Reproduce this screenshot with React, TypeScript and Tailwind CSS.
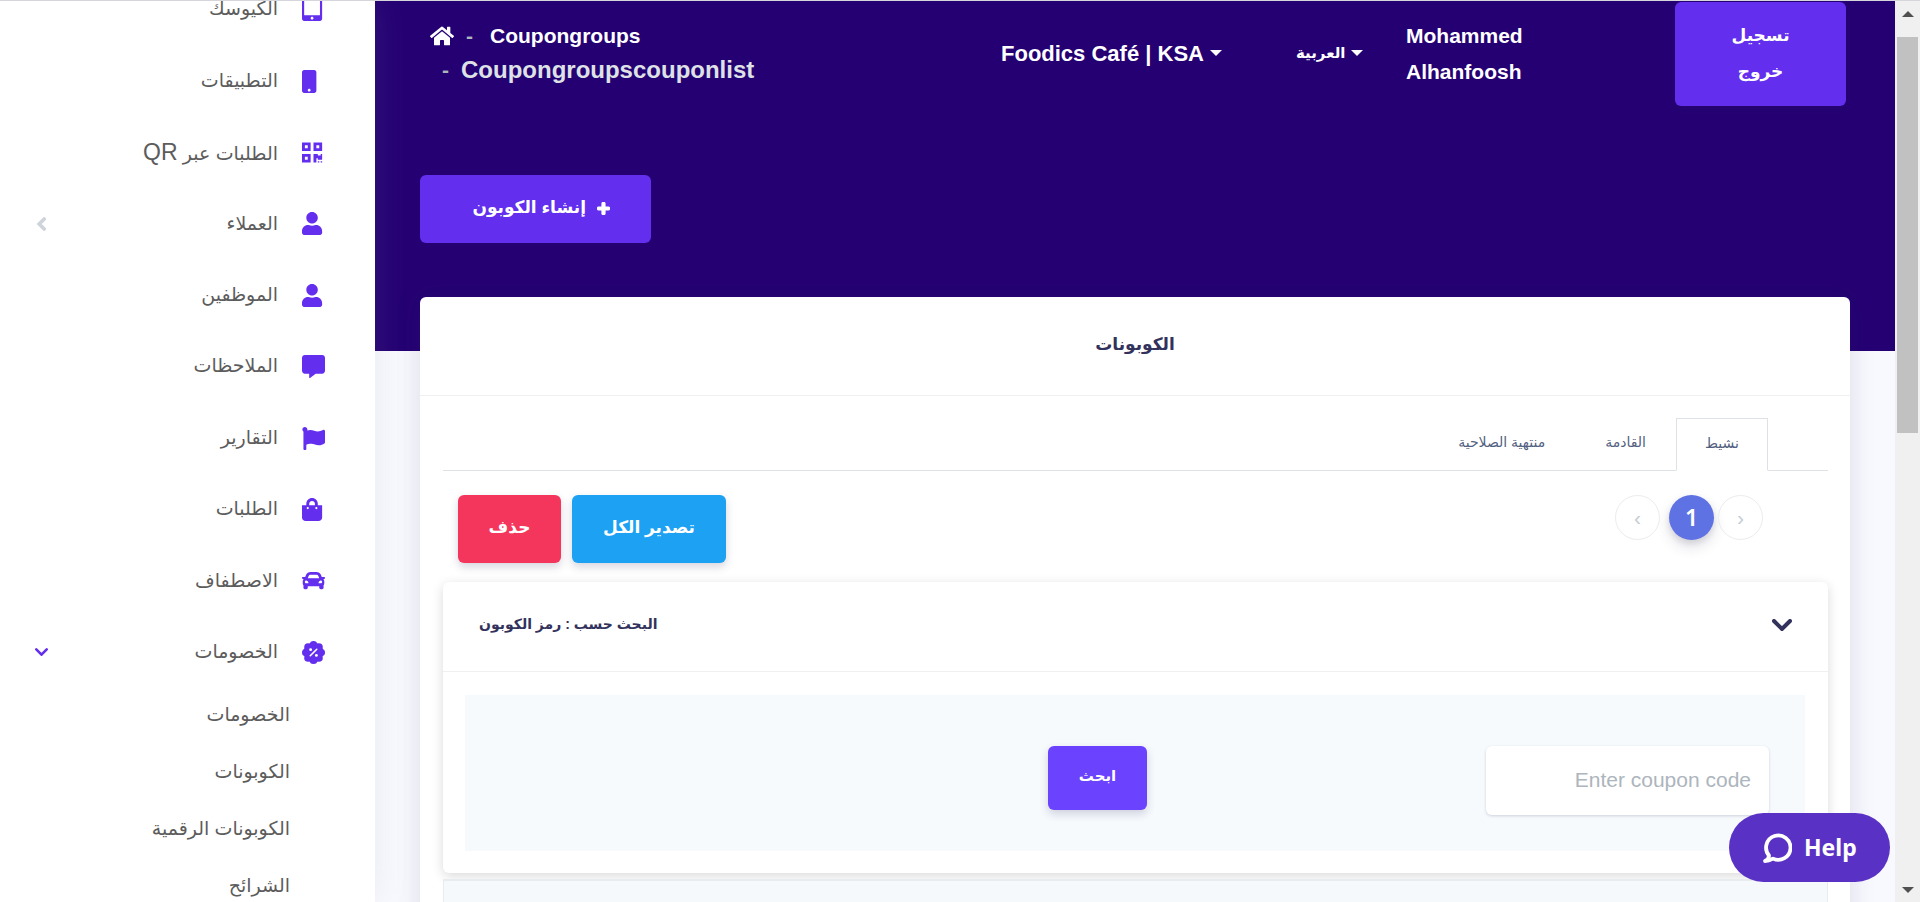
import type { ComponentType } from "react";
import {
  FaCar,
  FaCommentAlt,
  FaFlag,
  FaHome,
  FaMobile,
  FaPlus,
  FaQrcode,
  FaShoppingBag,
  FaTabletAlt,
  FaUser,
} from "react-icons/fa";

interface IconProps {
  className?: string;
  preserveAspectRatio?: string;
}

interface NavItem {
  label: string;
  latin?: string;
  icon: ComponentType<IconProps>;
  state?: "closed" | "open";
}

// Scalloped badge with a percent sign
function BadgePercent({ className }: IconProps) {
  return (
    <svg viewBox="0 0 24 24" className={className} fill="currentColor" aria-hidden="true">
      <circle cx="12" cy="12" r="10.2" />
      <circle cx="12" cy="4" r="4" />
      <circle cx="17.7" cy="6.3" r="4" />
      <circle cx="20" cy="12" r="4" />
      <circle cx="17.7" cy="17.7" r="4" />
      <circle cx="12" cy="20" r="4" />
      <circle cx="6.3" cy="17.7" r="4" />
      <circle cx="4" cy="12" r="4" />
      <circle cx="6.3" cy="6.3" r="4" />
      <path d="M8.6 15.4l6.8-6.8" stroke="#fff" strokeWidth="1.6" strokeLinecap="round" />
      <circle cx="9" cy="9" r="1.5" fill="#fff" />
      <circle cx="15" cy="15" r="1.5" fill="#fff" />
    </svg>
  );
}

function ChevronDown({ className }: IconProps) {
  return (
    <svg viewBox="0 0 20 12" className={className} fill="none" stroke="currentColor" strokeWidth="4" strokeLinecap="round" aria-hidden="true">
      <path d="M2 2l8 8 8-8" />
    </svg>
  );
}

function ChevronLeft({ className }: IconProps) {
  return (
    <svg viewBox="0 0 9 14" className={className} fill="none" stroke="currentColor" strokeWidth="3.6" strokeLinecap="round" aria-hidden="true">
      <path d="M7.2 2L2.200 7l5 5" />
    </svg>
  );
}

const navItems: NavItem[] = [
  { label: "الكيوسك", icon: FaTabletAlt },
  { label: "التطبيقات", icon: FaMobile },
  { label: "الطلبات عبر", latin: "QR", icon: FaQrcode },
  { label: "العملاء", icon: FaUser, state: "closed" },
  { label: "الموظفين", icon: FaUser },
  { label: "الملاحظات", icon: FaCommentAlt },
  { label: "التقارير", icon: FaFlag },
  { label: "الطلبات", icon: FaShoppingBag },
  { label: "الاصطفاف", icon: FaCar },
  { label: "الخصومات", icon: BadgePercent, state: "open" },
];

const subItems = ["الخصومات", "الكوبونات", "الكوبونات الرقمية", "الشرائح"];

function Sidebar() {
  return (
    <aside className="relative z-10 w-[375px] shrink-0 overflow-hidden bg-white text-[#5c5c5c] shadow-[0_0_32px_rgba(136,152,170,0.15)]">
      <nav className="-mt-[27px]">
        <ul className="grid h-[714px] auto-rows-fr">
          {navItems.map(({ label, latin, icon: Icon, state }) => (
            <li key={label}>
              <a href="#" dir="rtl" className="flex h-full items-center pr-[50px] pl-[35px]">
                <Icon className="h-[23px] w-[23px] text-[#632eee]" preserveAspectRatio="xMinYMid meet" />
                <span className="mr-[24px] grow text-[19px]">
                  {label} {latin && <span className="text-[23px]">{latin}</span>}
                </span>
                {state === "closed" && <ChevronLeft className="h-[14px] w-[13px] text-[#ced4da]" />}
                {state === "open" && <ChevronDown className="h-[8px] w-[13px] text-[#632eee]" />}
              </a>
            </li>
          ))}
        </ul>
        <ul>
          {subItems.map((label) => (
            <li key={label}>
              <a href="#" dir="rtl" className="flex h-[57px] items-center pr-[85px] pb-[2px] text-[19px]">
                {label}
              </a>
            </li>
          ))}
        </ul>
      </nav>
    </aside>
  );
}

function Caret() {
  return <span className="border-x-[6px] border-t-[6px] border-x-transparent border-t-white" />;
}

function TopBar() {
  return (
    <header className="flex h-[106px] items-start pt-px pr-[49px] pl-[55px] font-bold text-white">
      <nav className="w-[571px] pt-[20px]" aria-label="breadcrumb">
        <ol>
          <li className="flex h-[28px] items-center text-[21px]">
            <a href="#" aria-label="Home">
              <FaHome className="h-[24px] w-[24px]" />
            </a>
            <span className="mx-[12px] text-[#adb5bd]">-</span>
            <a href="#" className="ml-[5px]">Coupongroups</a>
          </li>
          <li className="flex h-[40px] items-center pl-[12px] text-[24px] text-[#dee2e6]">
            <span className="mr-[12px] text-[21px] text-[#adb5bd]">-</span>
            Coupongroupscouponlist
          </li>
        </ol>
      </nav>
      <button className="mt-[33px] flex h-[36px] w-[295px] items-center gap-[6px] text-[22px]">
        Foodics Café | KSA <Caret />
      </button>
      <button className="mt-[33px] flex h-[36px] w-[110px] items-center gap-[6px] text-[15px]">
        <span dir="rtl">العربية</span> <Caret />
      </button>
      <a href="#" className="mt-[16px] w-[140px] text-[21px] leading-[36px]">
        Mohammed Alhanfoosh
      </a>
      <button
        dir="rtl"
        className="ml-auto h-[104px] w-[171px] rounded-md bg-[#632eee] px-[50px] text-[17px] leading-[36px] shadow-[0_4px_6px_rgba(50,50,93,0.11)]"
      >
        تسجيل خروج
      </button>
    </header>
  );
}

const tabs = [
  { label: "نشيط", active: true },
  { label: "القادمة", active: false },
  { label: "منتهية الصلاحية", active: false },
];

function Tabs() {
  return (
    <div dir="rtl" role="tablist" className="flex border-b border-[#dee2e6] pr-[60px] text-[#525f7f]">
      {tabs.map(({ label, active }) => (
        <button
          key={label}
          role="tab"
          aria-selected={active}
          className={
            active
              ? "-mb-px h-[53px] w-[92px] border border-b-white border-[#dee2e6] bg-white pb-[3px] text-[14px]"
              : "h-[52px] px-[30px] pb-[3px] text-[14px]"
          }
        >
          {label}
        </button>
      ))}
    </div>
  );
}

function Toolbar() {
  return (
    <div className="flex h-[68px] items-start justify-between pr-[65px] pl-[15px]">
      <div className="flex gap-[11px] text-[17px] font-bold text-white">
        <button className="h-[68px] w-[103px] rounded-md bg-[#f5365c] pb-[3px] shadow-[0_4px_8px_rgba(50,50,93,0.2)]">
          حذف
        </button>
        <button className="h-[68px] w-[154px] rounded-md bg-[#1da1f2] pb-[3px] shadow-[0_4px_8px_rgba(50,50,93,0.2)]">
          تصدير الكل
        </button>
      </div>
      <nav className="flex text-[21px] text-[#c3ccd5]" aria-label="pagination">
        <button className="h-[45px] w-[45px] rounded-full border border-[#ececee]">‹</button>
        <button className="mr-[4px] ml-[9px] h-[45px] w-[45px] rounded-full bg-[#5e72e4] font-['Noto_Sans','Open_Sans',sans-serif] text-[23px] font-semibold text-white shadow-[0_7px_14px_rgba(50,50,93,0.15),0_3px_6px_rgba(0,0,0,0.1)]">
          1
        </button>
        <button className="h-[45px] w-[45px] rounded-full border border-[#ececee]">›</button>
      </nav>
    </div>
  );
}

function SearchCard() {
  return (
    <section className="mt-[19px] rounded-md bg-white shadow-[0_3px_12px_rgba(0,0,0,0.15)]">
      <div className="flex h-[90px] items-center justify-between border-b border-[#f0f0f2] px-[36px] pb-[4px] text-[#32325d]">
        <h3 dir="rtl" className="text-[14px] font-bold">
          البحث حسب : رمز الكوبون
        </h3>
        <button aria-label="Toggle">
          <ChevronDown className="h-[12px] w-[20px]" />
        </button>
      </div>
      <div className="pt-[23px] pr-[23px] pb-[22px] pl-[22px]">
        <form className="flex h-[156px] items-start justify-end bg-[#f6fafd] pt-[51px] pr-[36px]">
          <button
            type="button"
            className="mr-[339px] h-[64px] w-[99px] rounded-md bg-[#6b42fe] pb-[3px] text-[15px] font-bold text-white shadow-[0_4px_8px_rgba(50,50,93,0.2)]"
          >
            ابحث
          </button>
          <input
            type="text"
            aria-label="Coupon code"
            placeholder="Enter coupon code"
            className="h-[69px] w-[283px] rounded-md bg-white px-[18px] pb-[2px] text-right text-[21px] shadow-[0_1px_3px_rgba(50,50,93,0.2)] outline-none placeholder:text-[#adb5bd]"
          />
        </form>
      </div>
    </section>
  );
}

function Content() {
  return (
    <main className="min-w-0 grow overflow-hidden bg-[#f8f9fe]">
      <div className="h-[350px] bg-[#250073]">
        <TopBar />
        <div className="px-[45px] pt-[68px]">
          <button
            dir="rtl"
            className="flex h-[68px] w-[231px] items-center gap-[11px] rounded-md bg-[#632eee] pr-[41px] pb-[2px] text-[17px] font-bold text-white"
          >
            <FaPlus className="h-[13px] w-[13px] stroke-white stroke-[70px]" />
            إنشاء الكوبون
          </button>
        </div>
      </div>
      <section className="relative mr-[45px] ml-[45px] -mt-[54px] rounded-md bg-white shadow-[0_0_24px_rgba(50,50,93,0.15)]">
        <h2 className="flex h-[99px] items-center justify-center border-b border-[#f0f0f2] pb-[3px] text-[17px] font-bold text-[#32325d]">
          الكوبونات
        </h2>
        <div className="pt-[22px] pr-[22px] pl-[23px]">
          <Tabs />
          <div className="pt-[24px]">
            <Toolbar />
          </div>
          <SearchCard />
          <table className="mt-[6px] w-full">
            <thead>
              <tr>
                <th className="h-[80px] border border-t-2 border-[#e9ecef] bg-[#f6f9fc]" />
              </tr>
            </thead>
          </table>
        </div>
      </section>
    </main>
  );
}

function Scrollbar() {
  return (
    <div className="flex w-[25px] shrink-0 flex-col items-center justify-between bg-[#f0f0f0] pt-[10px] pb-[9px]">
      <div className="flex flex-col items-center gap-[20px]">
        <span className="border-x-[6px] border-b-[6px] border-x-transparent border-b-[#505050]" />
        <span className="h-[396px] w-[21px] bg-[#c1c1c1]" />
      </div>
      <span className="border-x-[6px] border-t-[6px] border-x-transparent border-t-[#505050]" />
    </div>
  );
}

export default function App() {
  return (
    <div className="flex h-screen overflow-hidden border-t border-[#d5d6dc] font-['Liberation_Sans','DejaVu_Sans',sans-serif]">
      <Sidebar />
      <Content />
      <Scrollbar />
      <button className="fixed right-[30px] bottom-[20px] z-20 flex h-[69px] w-[161px] items-center gap-[12px] rounded-full bg-[#5a31c5] pl-[33px] font-['Noto_Sans','Open_Sans',sans-serif] text-[23px] font-bold text-white">
        <svg viewBox="0 0 30 32" className="h-[32px] w-[30px]" fill="none" stroke="currentColor" strokeWidth="3.8" strokeLinecap="round" strokeLinejoin="round" aria-hidden="true">
          <path d="M7 23.500A12.200 12.200 0 1 1 11 26.600C8.600 28 6 29 3 29C5.400 27.800 7 26 7 23.500z" />
        </svg>
        Help
      </button>
    </div>
  );
}
